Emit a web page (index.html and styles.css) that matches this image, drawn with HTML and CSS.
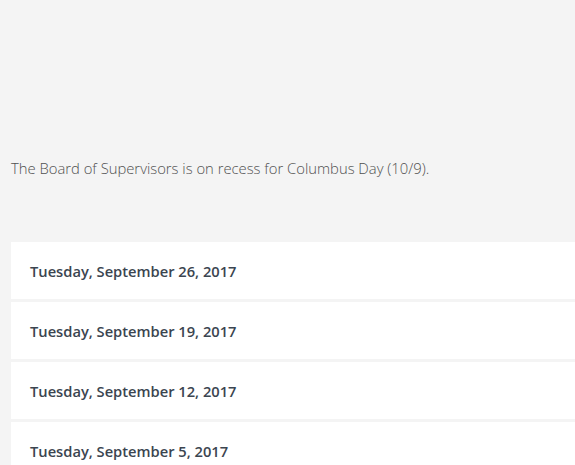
FILE: index.html
```html
<!DOCTYPE html>
<html>
<head>
<meta charset="utf-8">
<link rel="stylesheet" href="styles.css">
</head>
<body>
<div class="page">
  <p class="notice">The Board of Supervisors is on recess for Columbus Day (10/9).</p>
  <ul class="meetings">
    <li class="meeting">Tuesday, September 26, 2017</li>
    <li class="meeting">Tuesday, September 19, 2017</li>
    <li class="meeting">Tuesday, September 12, 2017</li>
    <li class="meeting">Tuesday, September 5, 2017</li>
  </ul>
</div>
</body>
</html>
```
FILE: styles.css
```css
html, body {
  margin: 0;
  padding: 0;
  background: #f4f4f4;
  overflow: hidden;
}
.page {
  padding: 158px 0 0 11px;
}
.notice {
  margin: 0 0 64px 0;
  font-family: "Open Sans", sans-serif;
  font-weight: 300;
  font-size: 14.8px;
  line-height: 20px;
  color: #505050;
}
.meetings {
  list-style: none;
  margin: 0;
  padding: 0;
  display: flex;
  flex-direction: column;
  gap: 3px;
}
.meeting {
  background: #fff;
  height: 57px;
  box-sizing: border-box;
  display: flex;
  align-items: center;
  padding: 1px 0 0 19px;
  font-family: "Open Sans", sans-serif;
  font-weight: 600;
  font-size: 14.7px;
  color: #3b4550;
}
```
